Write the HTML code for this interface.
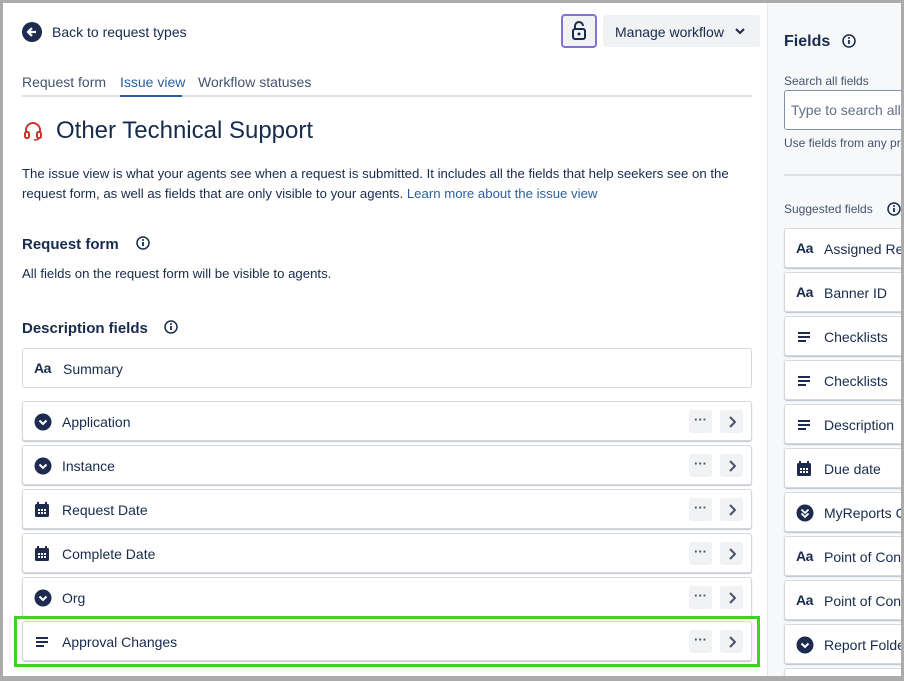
<!DOCTYPE html>
<html style="overflow:hidden;width:904px;height:681px"><head><style>
*{box-sizing:border-box;margin:0;padding:0}
body{width:904px;height:681px;overflow:hidden;background:#fff;font-family:"Liberation Sans",sans-serif;color:#172b4d;position:relative}
.frame{position:absolute;left:0;top:0;width:904px;height:681px;border:3px solid #ababab;border-bottom-width:5px;pointer-events:none;z-index:10}
.a{position:absolute;white-space:nowrap}
.row{position:absolute;left:22px;width:730px;height:40px;border:1px solid #d6d8dc;border-radius:3px;box-shadow:0 1px 1px rgba(9,30,66,.25);background:#fff;font-size:14px}
.row .t{position:absolute;left:39px;top:12px}
.row .ic{position:absolute;left:11px;top:11px}
.btn{position:absolute;top:8px;width:23px;height:23px;background:#f1f2f4;border-radius:3px;text-align:center;font-size:13px;line-height:20px;color:#44546f;font-weight:bold}
.btn svg{margin-top:6px}
.rp{position:absolute;left:767px;top:3px;width:137px;height:673px;background:#f7f8f9;border-left:1px solid #e4e6ea}
.card{position:absolute;left:784px;width:130px;height:40px;background:#fff;border:1px solid #d6d8dc;border-radius:3px;box-shadow:0 1px 1px rgba(9,30,66,.25);font-size:14px}
.card .t{position:absolute;left:39px;top:12px}
.card .ic{position:absolute;left:11px;top:11px}
.aa{font-weight:bold;font-size:14px;color:#172b4d;letter-spacing:-0.5px}
.clip{position:absolute;left:0;top:0;width:904px;height:676px;overflow:hidden}
</style></head><body>
<div class="clip">
<svg class="a" style="left:22px;top:22px" width="20" height="20" viewBox="0 0 20 20"><circle cx="10" cy="10" r="10" fill="#1d2b4f"/><path d="M14 10H6.5M10 6l-4 4 4 4" stroke="#fff" stroke-width="2.2" fill="none"/></svg>
<div class="a" style="left:52px;top:24px;font-size:14px">Back to request types</div>
<div class="a" style="left:561px;top:14px;width:36px;height:34px;border:2px solid #8270db;border-radius:4px;background:#f1f2f4"></div>
<svg class="a" style="left:571px;top:21px" width="16" height="20" viewBox="0 0 16 20"><path d="M4 8V5a4 4 0 0 1 8 0" stroke="#172b4d" stroke-width="2" fill="none"/><rect x="2" y="8" width="12" height="10" rx="2" stroke="#172b4d" stroke-width="2" fill="none"/><circle cx="8" cy="13" r="1.5" fill="#172b4d"/></svg>
<div class="a" style="left:603px;top:15px;width:157px;height:32px;background:#f1f2f4;border-radius:3px"></div>
<div class="a" style="left:615px;top:24px;font-size:14px">Manage workflow</div>
<svg class="a" style="left:735px;top:27px" width="10" height="8"><path d="M1 2l4 4 4-4" stroke="#172b4d" stroke-width="2" fill="none"/></svg>
<div class="a" style="left:22px;top:74px;font-size:14px;color:#44546f">Request form</div>
<div class="a" style="left:120px;top:74px;font-size:14px;color:#2a5fa0">Issue view</div>
<div class="a" style="left:198px;top:74px;font-size:14px;color:#44546f">Workflow statuses</div>
<div class="a" style="left:22px;top:95px;width:730px;height:2px;background:#dcdfe4"></div>
<div class="a" style="left:120px;top:95px;width:62px;height:2px;background:#2a5fa0"></div>
<svg class="a" style="left:23px;top:120px" width="20" height="22" viewBox="0 0 20 22"><path d="M3 13V10a7 7 0 0 1 14 0v3" stroke="#c9372c" stroke-width="2" fill="none"/><rect x="2" y="12" width="4" height="6" rx="1.5" stroke="#c9372c" stroke-width="2" fill="none"/><rect x="14" y="12" width="4" height="6" rx="1.5" stroke="#c9372c" stroke-width="2" fill="none"/><path d="M16 18q0 2-5 2" stroke="#c9372c" stroke-width="1.6" fill="none"/></svg>
<div class="a" style="left:56px;top:117px;font-size:24px">Other Technical Support</div>
<div class="a" style="left:22px;top:164px;font-size:13.2px;line-height:20px;white-space:normal;width:735px">The issue view is what your agents see when a request is submitted. It includes all the fields that help seekers see on the request form, as well as fields that are only visible to your agents. <span style="color:#2a5fa0">Learn more about the issue view</span></div>
<div class="a" style="left:22px;top:236px;font-size:15px;font-weight:bold">Request form</div>
<svg class="a" style="left:135px;top:235px" width="16" height="16"><circle cx="8" cy="8" r="6" stroke="#172b4d" stroke-width="1.5" fill="none"/><path d="M8 7v4" stroke="#172b4d" stroke-width="1.8"/><circle cx="8" cy="5" r="1" fill="#172b4d"/></svg>
<div class="a" style="left:22px;top:266px;font-size:13.2px">All fields on the request form will be visible to agents.</div>
<div class="a" style="left:22px;top:320px;font-size:15px;font-weight:bold">Description fields</div>
<svg class="a" style="left:163px;top:319px" width="16" height="16"><circle cx="8" cy="8" r="6" stroke="#172b4d" stroke-width="1.5" fill="none"/><path d="M8 7v4" stroke="#172b4d" stroke-width="1.8"/><circle cx="8" cy="5" r="1" fill="#172b4d"/></svg>

<div class="row" style="top:348px;box-shadow:none"><span class="ic aa" style="top:11px">Aa</span><span class="t" style="left:40px">Summary</span></div>

<div class="row" style="top:401px"><svg class="ic" width="18" height="18"><circle cx="9" cy="9" r="8.5" fill="#1d2b4f"/><path d="M5.5 7.5l3.5 3.5 3.5-3.5" stroke="#fff" stroke-width="2" fill="none"/></svg><span class="t">Application</span><div class="btn" style="left:666px">···</div><div class="btn" style="left:697px"><svg width="8" height="12"><path d="M2 1l5 5-5 5" stroke="#44546f" stroke-width="2" fill="none"/></svg></div></div>
<div class="row" style="top:445px"><svg class="ic" width="18" height="18"><circle cx="9" cy="9" r="8.5" fill="#1d2b4f"/><path d="M5.5 7.5l3.5 3.5 3.5-3.5" stroke="#fff" stroke-width="2" fill="none"/></svg><span class="t">Instance</span><div class="btn" style="left:666px">···</div><div class="btn" style="left:697px"><svg width="8" height="12"><path d="M2 1l5 5-5 5" stroke="#44546f" stroke-width="2" fill="none"/></svg></div></div>
<div class="row" style="top:489px"><svg class="ic" width="16" height="18"><rect x="1" y="3" width="14" height="13" rx="1.5" fill="#1d2b4f"/><path d="M4 1v4M12 1v4" stroke="#1d2b4f" stroke-width="2"/><g fill="#fff"><rect x="4" y="8" width="2" height="2"/><rect x="7" y="8" width="2" height="2"/><rect x="10" y="8" width="2" height="2"/><rect x="4" y="11" width="2" height="2"/><rect x="7" y="11" width="2" height="2"/><rect x="10" y="11" width="2" height="2"/></g></svg><span class="t">Request Date</span><div class="btn" style="left:666px">···</div><div class="btn" style="left:697px"><svg width="8" height="12"><path d="M2 1l5 5-5 5" stroke="#44546f" stroke-width="2" fill="none"/></svg></div></div>
<div class="row" style="top:533px"><svg class="ic" width="16" height="18"><rect x="1" y="3" width="14" height="13" rx="1.5" fill="#1d2b4f"/><path d="M4 1v4M12 1v4" stroke="#1d2b4f" stroke-width="2"/><g fill="#fff"><rect x="4" y="8" width="2" height="2"/><rect x="7" y="8" width="2" height="2"/><rect x="10" y="8" width="2" height="2"/><rect x="4" y="11" width="2" height="2"/><rect x="7" y="11" width="2" height="2"/><rect x="10" y="11" width="2" height="2"/></g></svg><span class="t">Complete Date</span><div class="btn" style="left:666px">···</div><div class="btn" style="left:697px"><svg width="8" height="12"><path d="M2 1l5 5-5 5" stroke="#44546f" stroke-width="2" fill="none"/></svg></div></div>
<div class="row" style="top:577px"><svg class="ic" width="18" height="18"><circle cx="9" cy="9" r="8.5" fill="#1d2b4f"/><path d="M5.5 7.5l3.5 3.5 3.5-3.5" stroke="#fff" stroke-width="2" fill="none"/></svg><span class="t">Org</span><div class="btn" style="left:666px">···</div><div class="btn" style="left:697px"><svg width="8" height="12"><path d="M2 1l5 5-5 5" stroke="#44546f" stroke-width="2" fill="none"/></svg></div></div>
<div class="row" style="top:621px"><svg class="ic" width="16" height="18"><path d="M2 5h12M2 9h12M2 13h8" stroke="#1d2b4f" stroke-width="2"/></svg><span class="t">Approval Changes</span><div class="btn" style="left:666px">···</div><div class="btn" style="left:697px"><svg width="8" height="12"><path d="M2 1l5 5-5 5" stroke="#44546f" stroke-width="2" fill="none"/></svg></div></div>
<div class="a" style="left:14px;top:616px;width:746px;height:51px;border:3px solid #3fd321"></div>

<div class="rp"></div>
<div class="a" style="left:784px;top:33px;font-size:16px;font-weight:bold">Fields</div>
<svg class="a" style="left:841px;top:33px" width="16" height="16"><circle cx="8" cy="8" r="6" stroke="#172b4d" stroke-width="1.5" fill="none"/><path d="M8 7v4" stroke="#172b4d" stroke-width="1.8"/><circle cx="8" cy="5" r="1" fill="#172b4d"/></svg>
<div class="a" style="left:784px;top:74px;font-size:12px;color:#44546f">Search all fields</div>
<div class="a" style="left:784px;top:90px;width:130px;height:40px;border:1px solid #8590a2;border-radius:3px;background:#fff"></div>
<div class="a" style="left:791px;top:102px;font-size:14px;color:#626f86">Type to search all</div>
<div class="a" style="left:784px;top:136px;font-size:12px;color:#44546f">Use fields from any pr</div>
<div class="a" style="left:784px;top:174px;width:120px;height:2px;background:#dcdfe4"></div>
<div class="a" style="left:784px;top:202px;font-size:12px;color:#44546f">Suggested fields</div>
<svg class="a" style="left:886px;top:201px" width="16" height="16"><circle cx="8" cy="8" r="6" stroke="#172b4d" stroke-width="1.5" fill="none"/><path d="M8 7v4" stroke="#172b4d" stroke-width="1.8"/><circle cx="8" cy="5" r="1" fill="#172b4d"/></svg>

<div class="card" style="top:228px"><span class="ic aa">Aa</span><span class="t">Assigned Re</span></div>
<div class="card" style="top:272px"><span class="ic aa">Aa</span><span class="t">Banner ID</span></div>
<div class="card" style="top:316px"><svg class="ic" width="16" height="18"><path d="M2 5h12M2 9h12M2 13h8" stroke="#1d2b4f" stroke-width="2"/></svg><span class="t">Checklists</span></div>
<div class="card" style="top:360px"><svg class="ic" width="16" height="18"><path d="M2 5h12M2 9h12M2 13h8" stroke="#1d2b4f" stroke-width="2"/></svg><span class="t">Checklists</span></div>
<div class="card" style="top:404px"><svg class="ic" width="16" height="18"><path d="M2 5h12M2 9h12M2 13h8" stroke="#1d2b4f" stroke-width="2"/></svg><span class="t">Description</span></div>
<div class="card" style="top:448px"><svg class="ic" width="16" height="18"><rect x="1" y="3" width="14" height="13" rx="1.5" fill="#1d2b4f"/><path d="M4 1v4M12 1v4" stroke="#1d2b4f" stroke-width="2"/><g fill="#fff"><rect x="4" y="8" width="2" height="2"/><rect x="7" y="8" width="2" height="2"/><rect x="10" y="8" width="2" height="2"/><rect x="4" y="11" width="2" height="2"/><rect x="7" y="11" width="2" height="2"/><rect x="10" y="11" width="2" height="2"/></g></svg><span class="t">Due date</span></div>
<div class="card" style="top:492px"><svg class="ic" width="18" height="18"><circle cx="9" cy="9" r="8.5" fill="#1d2b4f"/><path d="M5.5 5.5l3.5 3.5 3.5-3.5M5.5 9.5l3.5 3.5 3.5-3.5" stroke="#fff" stroke-width="1.8" fill="none"/></svg><span class="t">MyReports C</span></div>
<div class="card" style="top:536px"><span class="ic aa">Aa</span><span class="t">Point of Con</span></div>
<div class="card" style="top:580px"><span class="ic aa">Aa</span><span class="t">Point of Con</span></div>
<div class="card" style="top:624px"><svg class="ic" width="18" height="18"><circle cx="9" cy="9" r="8.5" fill="#1d2b4f"/><path d="M5.5 7.5l3.5 3.5 3.5-3.5" stroke="#fff" stroke-width="2" fill="none"/></svg><span class="t">Report Folde</span></div>
<div class="card" style="top:668px"></div>
</div>
<div class="frame"></div>
</body></html>
